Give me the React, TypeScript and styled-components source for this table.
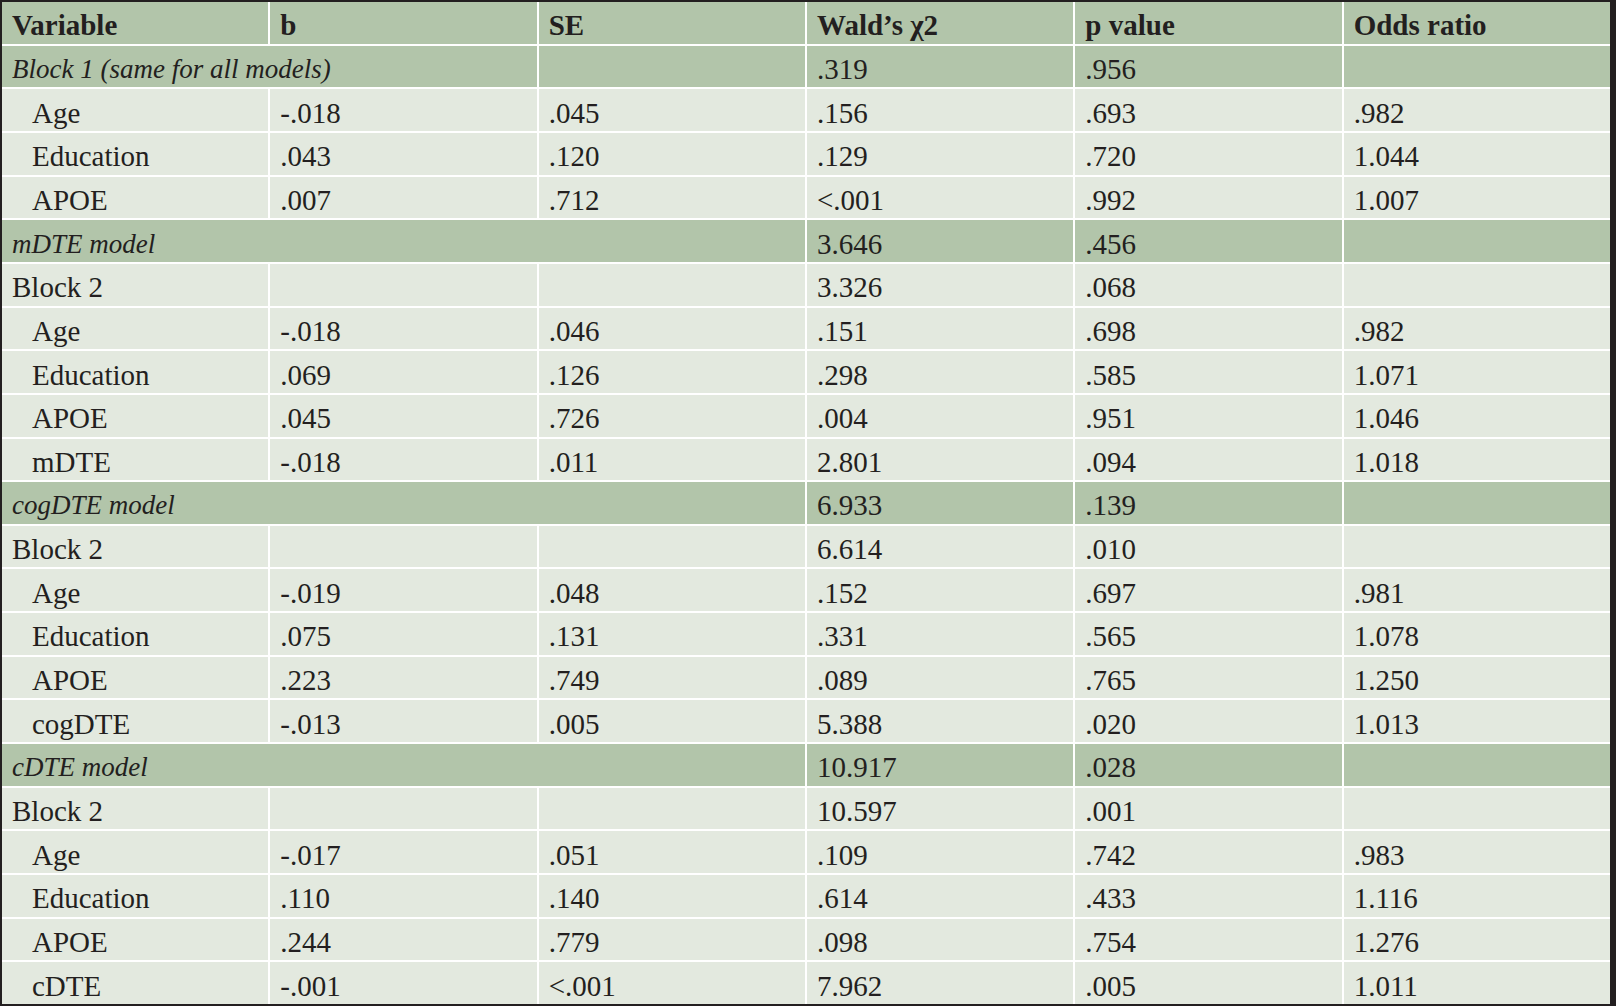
import React from "react";
import styled, { createGlobalStyle } from "styled-components";

const Global = createGlobalStyle`
  html, body {
    margin: 0;
    padding: 0;
    background: #231f20;
  }
  #root {
    width: 1616px;
    height: 1006px;
  }
`;

const Frame = styled.div`
  box-sizing: border-box;
  width: 1616px;
  height: 1006px;
  padding: 2px 6px 2px 2px;
  background: #231f20;
`;

const Grid = styled.div`
  display: grid;
  grid-template-columns: repeat(6, 1fr);
  grid-template-rows: repeat(23, 1fr);
  gap: 2px;
  width: 1608px;
  height: 1002px;
  background: #ffffff;
  font-family: "Liberation Serif", "Times New Roman", serif;
  color: #231f20;
`;

type CellProps = {
  $tone: "dark" | "light";
  $span?: number;
  $indent?: boolean;
  $italic?: boolean;
  $bold?: boolean;
};

const Cell = styled.div<CellProps>`
  box-sizing: border-box;
  display: flex;
  align-items: center;
  grid-column: span ${(p) => p.$span ?? 1};
  padding: 6px 8px 0 ${(p) => (p.$indent ? 30 : 10)}px;
  background: ${(p) => (p.$tone === "dark" ? "#b2c5aa" : "#e3e9df")};
  font-size: ${(p) => (p.$bold ? 29 : p.$italic ? 27 : 29)}px;
  font-weight: ${(p) => (p.$bold ? 700 : 400)};
  font-style: ${(p) => (p.$italic ? "italic" : "normal")};
  white-space: nowrap;
  overflow: hidden;
`;

type Row =
  | { kind: "head"; cells: string[] }
  | { kind: "section"; label: string; span: number; rest: string[] }
  | { kind: "block"; cells: string[] }
  | { kind: "item"; cells: string[] };

const rows: Row[] = [
  { kind: "head", cells: ["Variable", "b", "SE", "Wald\u2019s \u03c72", "p value", "Odds ratio"] },
  { kind: "section", label: "Block 1 (same for all models)", span: 2, rest: ["", ".319", ".956", ""] },
  { kind: "item", cells: ["Age", "-.018", ".045", ".156", ".693", ".982"] },
  { kind: "item", cells: ["Education", ".043", ".120", ".129", ".720", "1.044"] },
  { kind: "item", cells: ["APOE", ".007", ".712", "<.001", ".992", "1.007"] },
  { kind: "section", label: "mDTE model", span: 3, rest: ["3.646", ".456", ""] },
  { kind: "block", cells: ["Block 2", "", "", "3.326", ".068", ""] },
  { kind: "item", cells: ["Age", "-.018", ".046", ".151", ".698", ".982"] },
  { kind: "item", cells: ["Education", ".069", ".126", ".298", ".585", "1.071"] },
  { kind: "item", cells: ["APOE", ".045", ".726", ".004", ".951", "1.046"] },
  { kind: "item", cells: ["mDTE", "-.018", ".011", "2.801", ".094", "1.018"] },
  { kind: "section", label: "cogDTE model", span: 3, rest: ["6.933", ".139", ""] },
  { kind: "block", cells: ["Block 2", "", "", "6.614", ".010", ""] },
  { kind: "item", cells: ["Age", "-.019", ".048", ".152", ".697", ".981"] },
  { kind: "item", cells: ["Education", ".075", ".131", ".331", ".565", "1.078"] },
  { kind: "item", cells: ["APOE", ".223", ".749", ".089", ".765", "1.250"] },
  { kind: "item", cells: ["cogDTE", "-.013", ".005", "5.388", ".020", "1.013"] },
  { kind: "section", label: "cDTE model", span: 3, rest: ["10.917", ".028", ""] },
  { kind: "block", cells: ["Block 2", "", "", "10.597", ".001", ""] },
  { kind: "item", cells: ["Age", "-.017", ".051", ".109", ".742", ".983"] },
  { kind: "item", cells: ["Education", ".110", ".140", ".614", ".433", "1.116"] },
  { kind: "item", cells: ["APOE", ".244", ".779", ".098", ".754", "1.276"] },
  { kind: "item", cells: ["cDTE", "-.001", "<.001", "7.962", ".005", "1.011"] },
];

export default function App() {
  return (
    <>
      <Global />
      <Frame>
        <Grid>
          {rows.map((row, r) => {
            if (row.kind === "head") {
              return row.cells.map((c, i) => (
                <Cell key={`${r}-${i}`} $tone="dark" $bold>
                  {c}
                </Cell>
              ));
            }
            if (row.kind === "section") {
              return [
                <Cell key={`${r}-l`} $tone="dark" $span={row.span} $italic>
                  {row.label}
                </Cell>,
                ...row.rest.map((c, i) => (
                  <Cell key={`${r}-${i}`} $tone="dark">
                    {c}
                  </Cell>
                )),
              ];
            }
            return row.cells.map((c, i) => (
              <Cell key={`${r}-${i}`} $tone="light" $indent={i === 0 && row.kind === "item"}>
                {c}
              </Cell>
            ));
          })}
        </Grid>
      </Frame>
    </>
  );
}
